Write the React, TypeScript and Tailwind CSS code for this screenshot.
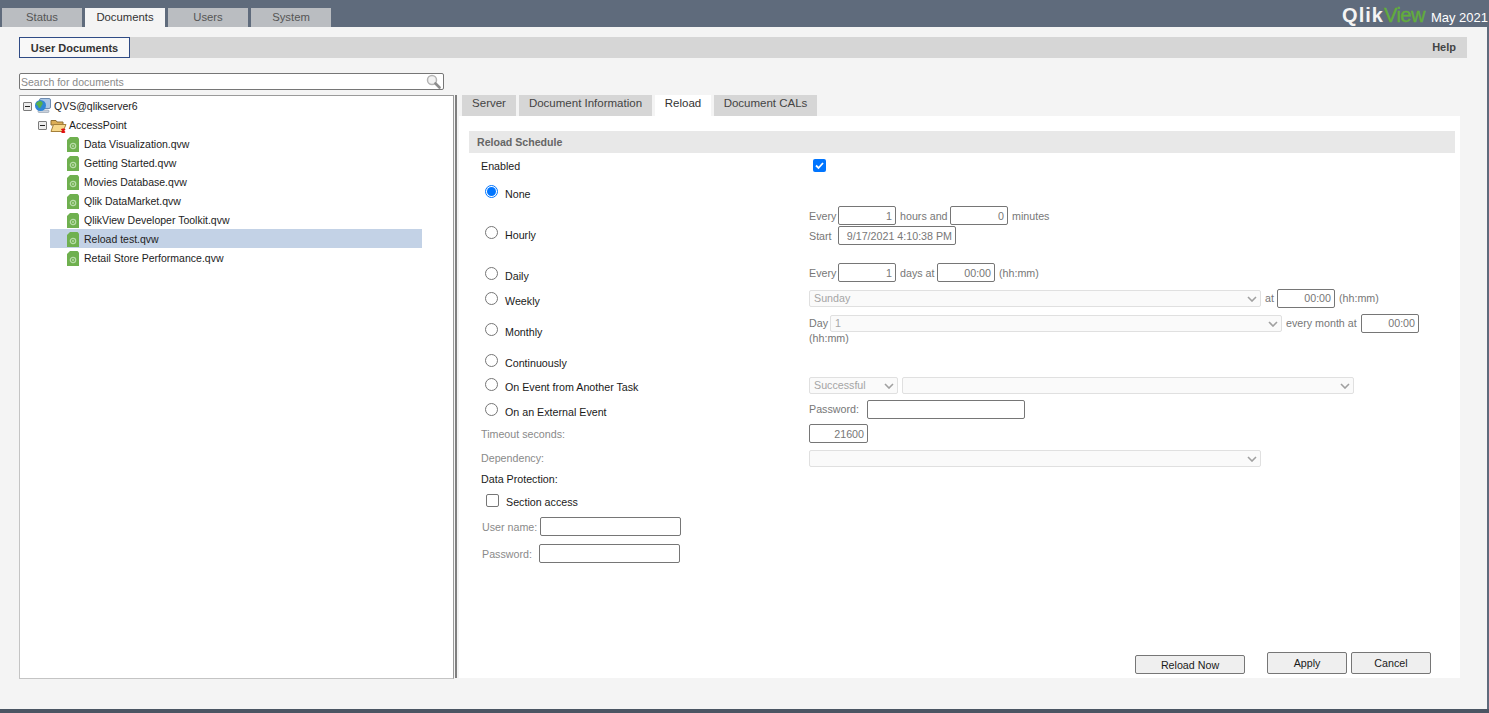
const Minus = () => (
  <span className="flex h-[9px] w-[9px] shrink-0 items-center justify-center rounded-[1px] border border-[#7b7b7b] bg-[#ececec]">
    <span className="h-px w-[5px] bg-[#222]"></span>
  </span>
);

const ServerIcon = () => (
  <svg width="17" height="17" viewBox="0 0 17 17" className="shrink-0">
    <rect x="5.500" y="0.500" width="11" height="10" rx="1.500" fill="#a9c6e6" stroke="#6d8bb0" />
    <rect x="4" y="12" width="11" height="2.500" rx="1" fill="#c9d1dc" stroke="#8d99a8" strokeWidth="0.600" />
    <circle cx="6.500" cy="7.500" r="5.500" fill="#2f86d6" />
    <path d="M2 5.500c1.500-2 4-3 5.500-2s1.500 2.500.5 3.500-1 3-2.500 3-1-2-2-2.500-1.500-1-1.500-2z" fill="#57b04d" />
  </svg>
);

const FolderIcon = () => (
  <svg width="17" height="16" viewBox="0 0 17 16" className="shrink-0">
    <path d="M1 2.500h5l1 1.500h6v3H1z" fill="#dcae55" stroke="#8f6f32" />
    <path d="M1 13.500 3.500 6.500h12.500L13 13.500z" fill="#f7d88a" stroke="#a5803a" />
    <path d="M11.500 11l3.500 3.500M15 11l-3.500 3.500M13.250 10.500v4.500" stroke="#e01010" strokeWidth="1.500" />
  </svg>
);

const DocIcon = () => (
  <svg width="12" height="15" viewBox="0 0 12 15" className="shrink-0">
    <path d="M0 3 3 0H10.500L12 1.500V15H0z" fill="#6fb04f" />
    <circle cx="6" cy="9" r="2.700" fill="none" stroke="#b9dcaa" strokeWidth="1.200" />
    <circle cx="6" cy="9" r="0.800" fill="#e8f4e2" />
  </svg>
);

const SearchIcon = () => (
  <svg width="15" height="15" viewBox="0 0 15 15">
    <circle cx="6" cy="6" r="4.500" fill="#f2f2f2" stroke="#b4b4b4" strokeWidth="1.500" />
    <path d="M9.500 9.500l4 4" stroke="#8c8c8c" strokeWidth="2.600" strokeLinecap="round" />
  </svg>
);

const Radio = ({ on }: { on?: boolean }) => (
  <span className={"flex h-[13px] w-[13px] shrink-0 items-center justify-center rounded-full border " + (on ? "border-[#0075ff]" : "border-[#767676]")}>
    {on && <span className="h-[9px] w-[9px] rounded-full bg-[#0075ff]"></span>}
  </span>
);

const Field = ({ value, className }: { value?: string; className: string }) => (
  <span className={"flex h-[19px] shrink-0 items-center justify-end whitespace-nowrap rounded-[2px] border border-[#767676] bg-white px-[3px] text-[#777] " + className}>
    {value}
  </span>
);

const DisabledSelect = ({ value, className }: { value?: string; className: string }) => (
  <span className={"flex h-[17px] shrink-0 items-center justify-between rounded-[2px] border border-[#e0e0e0] bg-[#fafafa] pl-[4px] pr-[3px] text-[#a5a5a5] " + className}>
    <span>{value}</span>
    <svg width="10" height="6" viewBox="0 0 10 6">
      <path d="M1 1l4 4 4-4" fill="none" stroke="#a0a0a0" strokeWidth="1.600" />
    </svg>
  </span>
);

const Option = ({ label, on, className }: { label: string; on?: boolean; className: string }) => (
  <div className={"flex h-[13px] items-center whitespace-nowrap pl-[16px] text-[#1a1a1a] " + className}>
    <Radio on={on} />
    <span className="ml-[7px] mt-[5px]">{label}</span>
  </div>
);

const Button = ({ label, className }: { label: string; className: string }) => (
  <span className={"flex items-center justify-center rounded-[2px] border border-[#767676] bg-[#efefef] text-[#1a1a1a] " + className}>
    {label}
  </span>
);

const docs = [
  "Data Visualization.qvw",
  "Getting Started.qvw",
  "Movies Database.qvw",
  "Qlik DataMarket.qvw",
  "QlikView Developer Toolkit.qvw",
  "Reload test.qvw",
  "Retail Store Performance.qvw",
];

const topTabs = ["Status", "Documents", "Users", "System"];
const subTabs = [
  { label: "Server", w: "w-[54px]" },
  { label: "Document Information", w: "w-[133px]" },
  { label: "Reload", w: "w-[56px]" },
  { label: "Document CALs", w: "w-[103px]" },
];

export default function App() {
  return (
    <div className="flex h-[713px] w-[1489px] flex-col overflow-hidden bg-[#f4f4f4] font-['Liberation_Sans',Arial,sans-serif] text-[10.700px] leading-none text-[#333]">
      <header className="flex h-[27px] shrink-0 items-end justify-between bg-[#5f6b7c]">
        <div className="flex gap-[3px] pl-[2px] text-[11.300px]">
          {topTabs.map((t) => (
            <div
              key={t}
              className={
                "flex h-[19px] w-[80px] items-center justify-center " +
                (t === "Documents" ? "bg-[#f4f4f4] text-[#333]" : "bg-[#babdc1] text-[#555]")
              }
            >
              {t}
            </div>
          ))}
        </div>
        <div className="flex items-baseline pb-[2px] pr-[1px]">
          <span className="text-[20px] font-bold tracking-[1px] text-[#f4f4f4]">Qlik</span>
          <span className="text-[20px] tracking-[-0.500px] text-[#62ad3c] [-webkit-text-stroke:0.400px_#62ad3c]">View</span>
          <span className="ml-[6px] text-[13px] text-white">May 2021</span>
        </div>
      </header>

      <div className="flex min-h-0 flex-1 flex-col border-r-2 border-[#5f6b7c] pl-[19px]">
        <div className="mt-[10px] flex h-[21px] w-[1448px] shrink-0 items-center justify-between bg-[#d6d6d6] text-[11px]">
          <div className="flex h-[21px] w-[111px] items-center justify-center border border-[#2f4b85] bg-[#f8f8f8] pt-[1px] font-bold text-[#333]">
            User Documents
          </div>
          <span className="pr-[11px] font-bold text-[#444]">Help</span>
        </div>

        <div className="mt-[15px] flex h-[17px] w-[425px] shrink-0 items-center justify-between rounded-[2px] border border-[#767676] bg-white pl-[1px] pr-[2px] text-[10.500px] text-[#8a8a8a]">
          <span className="pt-[2px]">Search for documents</span>
          <SearchIcon />
        </div>

        <div className="mt-[5px] flex min-h-0 gap-[1px]">
          <aside className="h-[584px] w-[435px] shrink-0 border border-[#c4c4c4] border-r-[#9a9a9a] border-t-[#9a9a9a] bg-white pl-[3px] text-[10.500px] text-[#222]">
            <div className="flex h-[19px] items-center pt-[2px]">
              <Minus />
              <span className="ml-[2px]"><ServerIcon /></span>
              <span className="ml-[3px]">QVS@qlikserver6</span>
            </div>
            <div className="flex h-[19px] items-center pl-[15px] pt-[2px]">
              <Minus />
              <span className="ml-[3px]"><FolderIcon /></span>
              <span className="ml-[2px]">AccessPoint</span>
            </div>
            {docs.map((d) => (
              <div
                key={d}
                className={"ml-[27px] flex h-[19px] w-[372px] items-center pl-[17px] pt-[2px] " + (d === "Reload test.qvw" ? "bg-[#c3d2e6]" : "")}
              >
                <DocIcon />
                <span className="ml-[5px]">{d}</span>
              </div>
            ))}
          </aside>

          <div className="h-[583px] w-[2px] shrink-0 bg-[#7f7f7f]"></div>

          <main className="ml-[1px] flex w-[1001px] flex-col">
            <div className="flex h-[21px] shrink-0 gap-[3px] pl-[3px] text-[11.500px]">
              {subTabs.map((t) => (
                <div
                  key={t.label}
                  className={
                    "flex items-center justify-center pb-[4px] " + t.w + " " +
                    (t.label === "Reload" ? "bg-white text-[#333]" : "bg-[#d6d6d6] text-[#444]")
                  }
                >
                  {t.label}
                </div>
              ))}
            </div>

            <div className="relative h-[562px] bg-white pl-[10px] pr-[5px] pt-[15px]">
              <div className="flex h-[22px] items-center bg-[#e8e8e8] pl-[8px] text-[10.600px] font-bold text-[#666]">Reload Schedule</div>

              <div className="grid grid-cols-[340px_1fr]">
                <div className="flex flex-col">
                  <div className="mt-[6px] flex h-[14px] items-center pl-[12px] text-[#1a1a1a]">Enabled</div>
                  <Option label="None" on className="mt-[12px]" />
                  <Option label="Hourly" className="mt-[28px]" />
                  <Option label="Daily" className="mt-[28px]" />
                  <Option label="Weekly" className="mt-[12px]" />
                  <Option label="Monthly" className="mt-[18px]" />
                  <Option label="Continuously" className="mt-[18px]" />
                  <Option label="On Event from Another Task" className="mt-[11px]" />
                  <Option label="On an External Event" className="mt-[12px]" />
                  <div className="mt-[11px] flex h-[14px] items-center pl-[12px] text-[#8a8a8a]">Timeout seconds:</div>
                  <div className="mt-[10px] flex h-[14px] items-center pl-[12px] text-[#8a8a8a]">Dependency:</div>
                  <div className="mt-[7px] flex h-[14px] items-center pl-[12px] text-[#1a1a1a]">Data Protection:</div>
                  <div className="mt-[8px] flex h-[13px] items-center pl-[17px] text-[#1a1a1a]">
                    <span className="h-[13px] w-[13px] rounded-[2px] border border-[#767676]"></span>
                    <span className="ml-[7px] mt-[3px]">Section access</span>
                  </div>
                  <div className="mt-[10px] flex items-center pl-[13px] text-[#8a8a8a]">
                    <span className="w-[58px] whitespace-nowrap pt-[2px]">User name:</span>
                    <Field className="w-[141px]" />
                  </div>
                  <div className="mt-[8px] flex items-center pl-[13px] text-[#8a8a8a]">
                    <span className="w-[57px] pt-[2px]">Password:</span>
                    <Field className="w-[141px]" />
                  </div>
                </div>

                <div className="flex flex-col text-[#777]">
                  <div className="ml-[4px] mt-[6px] h-[13px] w-[13px] rounded-[2px] bg-[#0075ff] pl-[2px] pt-[2px]">
                    <svg width="9" height="9" viewBox="0 0 9 9">
                      <path d="M1 4.500l2.500 2.500L8 2" fill="none" stroke="#fff" strokeWidth="1.800" />
                    </svg>
                  </div>
                  <div className="mt-[34px] flex items-center [&>span]:pt-[2px]">
                    <span className="w-[29px]">Every</span>
                    <Field value="1" className="w-[58px]" />
                    <span className="ml-[4px] w-[46px] whitespace-nowrap">hours and</span>
                    <Field value="0" className="ml-[4px] w-[58px]" />
                    <span className="ml-[4px]">minutes</span>
                  </div>
                  <div className="mt-[1px] flex items-center [&>span]:pt-[2px]">
                    <span className="w-[29px]">Start</span>
                    <Field value="9/17/2021 4:10:38 PM" className="w-[118px]" />
                  </div>
                  <div className="mt-[18px] flex items-center [&>span]:pt-[2px]">
                    <span className="w-[29px]">Every</span>
                    <Field value="1" className="w-[58px]" />
                    <span className="ml-[4px] w-[33px] whitespace-nowrap">days at</span>
                    <Field value="00:00" className="ml-[4px] w-[58px]" />
                    <span className="ml-[4px]">(hh:mm)</span>
                  </div>
                  <div className="mt-[7px] flex items-center">
                    <DisabledSelect value="Sunday" className="w-[452px]" />
                    <span className="ml-[4px] w-[12px]">at</span>
                    <Field value="00:00" className="w-[58px]" />
                    <span className="ml-[4px]">(hh:mm)</span>
                  </div>
                  <div className="mt-[6px] flex items-center">
                    <span className="w-[21px]">Day</span>
                    <DisabledSelect value="1" className="w-[452px]" />
                    <span className="ml-[4px] w-[75px] whitespace-nowrap">every month at</span>
                    <Field value="00:00" className="w-[58px]" />
                  </div>
                  <div className="h-[12px]">(hh:mm)</div>
                  <div className="mt-[32px] flex items-center gap-[4px]">
                    <DisabledSelect value="Successful" className="w-[89px]" />
                    <DisabledSelect className="w-[452px]" />
                  </div>
                  <div className="mt-[6px] flex items-center">
                    <span className="w-[58px]">Password:</span>
                    <Field className="w-[158px]" />
                  </div>
                  <div className="mt-[5px]">
                    <Field value="21600" className="w-[59px] pt-[2px]" />
                  </div>
                  <div className="mt-[7px]">
                    <DisabledSelect className="w-[452px]" />
                  </div>
                </div>
              </div>

              <div className="absolute bottom-[4px] left-[676px] flex items-end">
                <Button label="Reload Now" className="h-[19px] w-[110px] pt-[2px]" />
                <Button label="Apply" className="ml-[22px] h-[22px] w-[80px]" />
                <Button label="Cancel" className="ml-[4px] h-[22px] w-[80px]" />
              </div>
            </div>
          </main>
        </div>
      </div>

      <div className="h-[4px] shrink-0 bg-[#4b5563]"></div>
    </div>
  );
}
